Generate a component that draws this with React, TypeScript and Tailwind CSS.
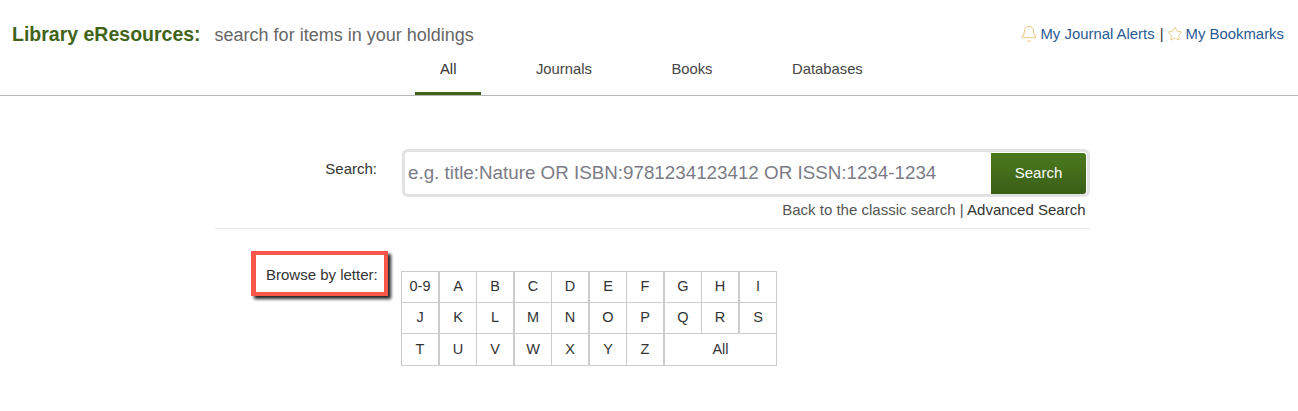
import { Bell, Star } from 'lucide-react'

const tabs = ['All', 'Journals', 'Books', 'Databases']

const rows = [
  ['0-9', 'A', 'B', 'C', 'D', 'E', 'F', 'G', 'H', 'I'],
  ['J', 'K', 'L', 'M', 'N', 'O', 'P', 'Q', 'R', 'S'],
  ['T', 'U', 'V', 'W', 'X', 'Y', 'Z'],
]

export default function App() {
  return (
    <div className="h-[411px] bg-white font-['Liberation_Sans',Arial,sans-serif] text-[15px] text-[#333] overflow-hidden">
      <header className="h-[96px] border-b border-[#b8b8b8]">
        <div className="flex items-start justify-between pl-3 pr-[14px]">
          <div className="flex items-baseline pt-[21px]">
            <h1 className="text-[19.5px] leading-[26px] font-bold text-[#3f6419]">Library eResources:</h1>
            <span className="ml-[14px] text-[18px] leading-[26px] text-[#666]">search for items in your holdings</span>
          </div>
          <div className="flex items-center pt-[24px] text-[14.9px] leading-[20px] text-[#2a5b94]">
            <Bell size={18} strokeWidth={1.5} className="text-[#e6cd85] mr-[2px]" />
            <a>My Journal Alerts</a>
            <span className="ml-[5px] mr-[3px] text-[#333]">|</span>
            <Star size={16} strokeWidth={1.5} className="text-[#e6cd85] mr-[3px]" />
            <a>My Bookmarks</a>
          </div>
        </div>
        <nav className="flex pl-[415px]">
          {tabs.map((tab, i) => (
            <a
              key={tab}
              className={`h-[47px] px-[25px] pt-[11px] text-[14.8px] leading-[20px] mr-[29.5px] border-b-[3px] ${i === 0 ? 'border-[#3f6419] text-[#333]' : 'border-transparent text-[#444]'}`}
            >
              {tab}
            </a>
          ))}
        </nav>
      </header>

      <main className="ml-[215px] w-[875px] pt-[53px]">
        <div className="flex">
          <label className="w-[162px] pt-[10px] text-right leading-[20px] text-[#333]">Search:</label>
          <div className="ml-[25px] flex-1">
            <div className="flex h-[48px] rounded-[6px] border-[3px] border-[#e2e2e2] bg-white">
              <div className="flex-1 pl-[3px] text-[18.8px] leading-[42px] text-[#7b7b85] whitespace-nowrap">
                e.g. title:Nature OR ISBN:9781234123412 OR ISSN:1234-1234
              </div>
              <button className="w-[95px] mt-[1px] mr-[1px] rounded-r-[3px] bg-gradient-to-b from-[#4a7a1e] to-[#3a5e17] text-[15px] text-white">
                Search
              </button>
            </div>
            <div className="mt-[3px] pr-[4.5px] text-right text-[15px] leading-[20px] text-[#555]">
              Back to the classic search <span>|</span> <a className="text-[#333]">Advanced Search</a>
            </div>
          </div>
        </div>

        <div className="mt-[8px] border-t border-[#e8e8e8] flex pt-[42px]">
          <div className="relative w-[186px] shrink-0">
            <div className="absolute left-[36px] top-[-20px] w-[137px] h-[45px] border-[4px] border-l-[5px] border-[#f95749] shadow-[3px_3px_3px_rgba(0,0,0,0.85)] pl-[10px] pt-[10px] leading-[20px] text-[#333] whitespace-nowrap">
              Browse by letter:
            </div>
          </div>
          <table className="w-[376px] table-fixed border-collapse text-center text-[14.5px] text-[#333]">
            <tbody>
              {rows.map((row, r) => (
                <tr key={r} className={r === 2 ? 'h-[32px]' : 'h-[31px]'}>
                  {row.map((letter, i) => (
                    <td key={letter} className={`border border-[#cccccc] p-0 ${i % 2 === 0 ? 'border-r-2' : ''}`}>{letter}</td>
                  ))}
                  {r === 2 && <td colSpan={3} className="border border-[#cccccc] p-0">All</td>}
                </tr>
              ))}
            </tbody>
          </table>
        </div>
      </main>
    </div>
  )
}
